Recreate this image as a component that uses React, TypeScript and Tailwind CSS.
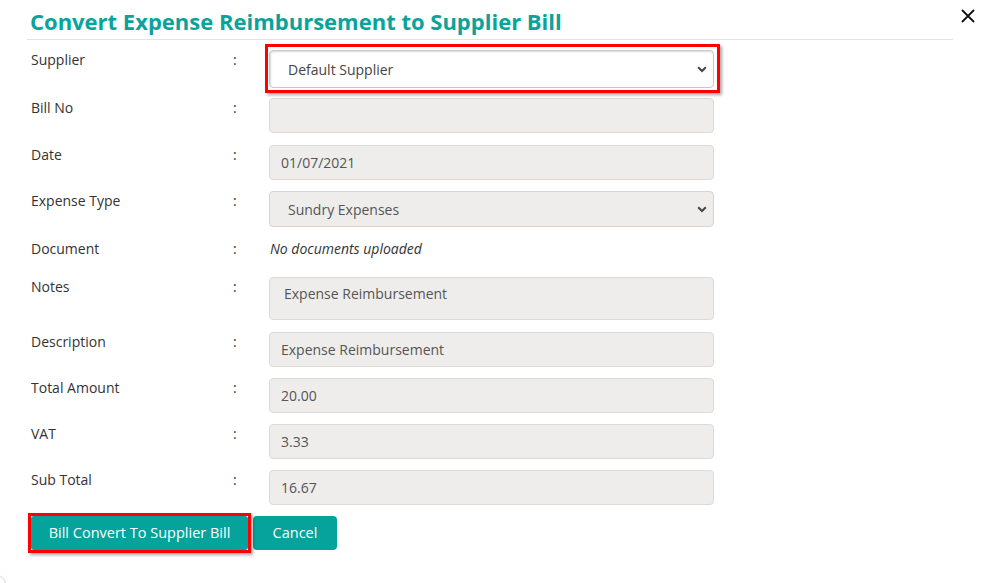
import React from "react";

const Chevron = () => (
  <svg width="10" height="7" viewBox="0 0 10 7" className="shrink-0">
    <path d="M1.2 1.3 L5 5 L8.8 1.3" fill="none" stroke="#444" strokeWidth="2" />
  </svg>
);

const Row = ({ label, children, className = "" }: { label: string; children: React.ReactNode; className?: string }) => (
  <div className={`flex items-start ${className}`}>
    <div className="w-[202px] shrink-0 text-[14px] leading-[20px] text-[#333]">{label}</div>
    <div className="w-[36px] shrink-0 text-[14px] leading-[20px] text-[#333]">:</div>
    <div className="w-[445px] shrink-0">{children}</div>
  </div>
);

const Field = ({ value, h = "h-[35px]", pl = "pl-[11px]", center = true }: { value: string; h?: string; pl?: string; center?: boolean }) => (
  <div
    className={`${h} ${pl} flex ${center ? "items-center" : "items-start pt-[5px]"} rounded-[4px] border border-[#dddbd9] bg-[#eeedeb] text-[14px] text-[#555]`}
  >
    {value}
  </div>
);

export default function App() {
  return (
    <div className="relative h-[583px] w-[981px] overflow-hidden bg-white" style={{ fontFamily: '"Open Sans", "Noto Sans", sans-serif' }}>
      <button className="absolute right-[6px] top-[8px] flex h-[15px] w-[15px] items-center justify-center">
        <svg width="14" height="14" viewBox="0 0 14 14">
          <path d="M1 1 L13 13 M13 1 L1 13" stroke="#111" strokeWidth="1.8" />
        </svg>
      </button>
      <div className="absolute bottom-[-10px] left-[-12px] h-[18px] w-[18px] rounded-full border border-[#d6d6d6] bg-white" />

      <div className="ml-[27px] w-[926px]">
        <h1 className="pl-[3px] pt-[6px] text-[22px] font-bold leading-[30px] text-[#0aa39b]">
          Convert Expense Reimbursement to Supplier Bill
        </h1>
        <div className="mt-[3px] h-px bg-[#e3e3e3]" />

        <div className="pl-[4px]">
          <Row label="Supplier" className="mt-[10px]">
            <div className="relative">
              <div className="absolute left-[-4px] top-[-6px] h-[49px] w-[455px] border-[3px] border-[#f00] shadow-[2px_2px_3px_rgba(0,0,0,0.35)]" />
              <div className="relative flex h-[38px] items-center justify-between rounded-[4px] border border-[#c8c8c8] bg-white pl-[18px] pr-[6px] text-[14px] text-[#444] shadow-[inset_1px_1px_2px_rgba(0,0,0,0.15)]">
                <span>Default Supplier</span>
                <Chevron />
              </div>
            </div>
          </Row>

          <Row label="Bill No" className="mt-[10px]">
            <Field value="" />
          </Row>
          <Row label="Date" className="mt-[12px]">
            <Field value="01/07/2021" />
          </Row>
          <Row label="Expense Type" className="mt-[11px]">
            <div className="flex h-[36px] items-center justify-between rounded-[4px] border border-[#d6d4d2] bg-[#eeedeb] pl-[18px] pr-[6px] text-[14px] text-[#555]">
              <span>Sundry Expenses</span>
              <Chevron />
            </div>
          </Row>
          <Row label="Document" className="mt-[12px]">
            <div className="pl-[1px] text-[14px] italic leading-[20px] text-[#333]">No documents uploaded</div>
          </Row>
          <Row label="Notes" className="mt-[18px]">
            <Field value="Expense Reimbursement" h="h-[43px]" pl="pl-[14px]" center={false} />
          </Row>
          <Row label="Description" className="mt-[12px]">
            <Field value="Expense Reimbursement" />
          </Row>
          <Row label="Total Amount" className="mt-[11px]">
            <Field value="20.00" />
          </Row>
          <Row label="VAT" className="mt-[11px]">
            <Field value="3.33" />
          </Row>
          <Row label="Sub Total" className="mt-[11px]">
            <Field value="16.67" />
          </Row>
        </div>

        <div className="mt-[11px] flex items-center gap-[5px] pl-[4px]">
          <div className="relative">
            <div className="absolute left-[-3px] top-[-3px] h-[40px] w-[223px] border-[3px] border-[#f00] shadow-[2px_2px_3px_rgba(0,0,0,0.35)]" />
            <button className="relative flex h-[34px] w-[217px] items-center justify-center rounded-[3px] bg-[#05a39b] text-[14.5px] text-white">
              Bill Convert To Supplier Bill
            </button>
          </div>
          <button className="flex h-[34px] w-[84px] items-center justify-center rounded-[4px] bg-[#05a39b] text-[14.5px] text-white">
            Cancel
          </button>
        </div>
      </div>
    </div>
  );
}
